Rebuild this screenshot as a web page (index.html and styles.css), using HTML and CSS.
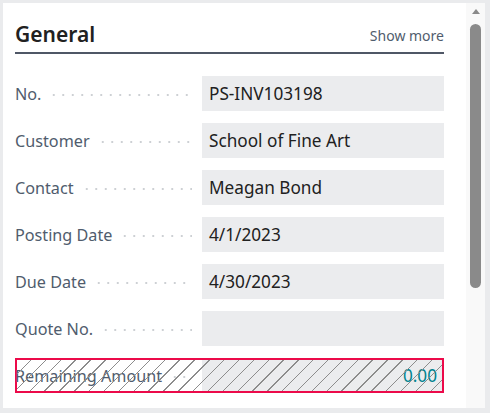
FILE: index.html
```html
<!DOCTYPE html>
<html>
<head>
<meta charset="utf-8">
<link rel="stylesheet" href="styles.css">
</head>
<body>
<div class="panel">
  <div class="content">
    <div class="header">
      <span class="title">General</span>
      <span class="more">Show more</span>
    </div>
    <div class="fields">
      <div class="row"><span class="label">No.</span><span class="leader"></span><span class="value">PS-INV103198</span></div>
      <div class="row"><span class="label">Customer</span><span class="leader"></span><span class="value">School of Fine Art</span></div>
      <div class="row"><span class="label">Contact</span><span class="leader"></span><span class="value">Meagan Bond</span></div>
      <div class="row"><span class="label">Posting Date</span><span class="leader"></span><span class="value">4/1/2023</span></div>
      <div class="row"><span class="label">Due Date</span><span class="leader"></span><span class="value">4/30/2023</span></div>
      <div class="row"><span class="label">Quote No.</span><span class="leader"></span><span class="value"></span></div>
      <div class="row selected"><span class="label">Remaining Amount</span><span class="leader"></span><span class="value amount">0.00</span></div>
    </div>
  </div>
  <div class="scrollbar">
    <div class="arrow"></div>
    <div class="thumb"></div>
  </div>
</div>
</body>
</html>
```

FILE: styles.css
```css
* { box-sizing: border-box; }
html, body { margin: 0; padding: 0; }
body {
  background: #eaebed;
  width: 490px;
  height: 413px;
  overflow: hidden;
  font-family: "Noto Sans", "Open Sans", sans-serif;
}
.panel {
  margin: 3px 5px 0 3px;
  height: 405px;
  background: #ffffff;
  display: flex;
}
.content {
  flex: 1;
  padding: 0 22px 0 12px;
}
.header {
  display: flex;
  justify-content: space-between;
  align-items: flex-end;
  height: 51px;
  padding-bottom: 4px;
  border-bottom: 2px solid #4f5766;
}
.title {
  font-size: 21px;
  font-weight: 600;
  color: #212121;
  line-height: 28px;
}
.more {
  font-size: 14px;
  color: #505c6d;
  line-height: 20px;
  padding-bottom: 2px;
}
.fields {
  display: flex;
  flex-direction: column;
  gap: 12px;
  padding-top: 22px;
}
.row {
  display: flex;
  align-items: center;
  height: 35px;
  position: relative;
}
.label {
  font-size: 16.2px;
  color: #505c6d;
  white-space: nowrap;
  padding-right: 8px;
}
.leader {
  flex: 1;
  align-self: center;
  height: 2px;
  margin-right: 10px;
  margin-top: 2px;
  background-image: radial-gradient(circle, #cdd0d4 0.8px, transparent 1.1px);
  background-size: 9.5px 2px;
  background-repeat: repeat-x;
  background-position: 0 0;
}
.value {
  width: 242px;
  height: 35px;
  flex: none;
  background: #ebecee;
  color: #212121;
  font-size: 17.2px;
  line-height: 35px;
  padding-left: 7px;
  white-space: nowrap;
}
.selected {
  border: 2px solid #ec0a4a;
}
.selected .label { margin-left: -2px; }
.selected .value { height: 31px; line-height: 31px; width: 240px; }
.selected::after {
  content: "";
  position: absolute;
  inset: 0;
  pointer-events: none;
  background-image: repeating-linear-gradient(135deg, transparent 0, transparent 9.5px, #8c8c8c 9.5px, #8c8c8c 10.5px);
}
.amount {
  text-align: right;
  padding-right: 5px;
  color: #00838f;
}
.scrollbar {
  width: 19px;
  background: #f9f9f9;
  position: relative;
}
.arrow {
  width: 0;
  height: 0;
  margin: 6px auto 0;
  border-left: 4px solid transparent;
  border-right: 4px solid transparent;
  border-bottom: 5px solid #8a8a8a;
}
.thumb {
  width: 11px;
  margin: 10px auto 0;
  height: 264px;
  border-radius: 6px;
  background: #8a8a8a;
}
```
